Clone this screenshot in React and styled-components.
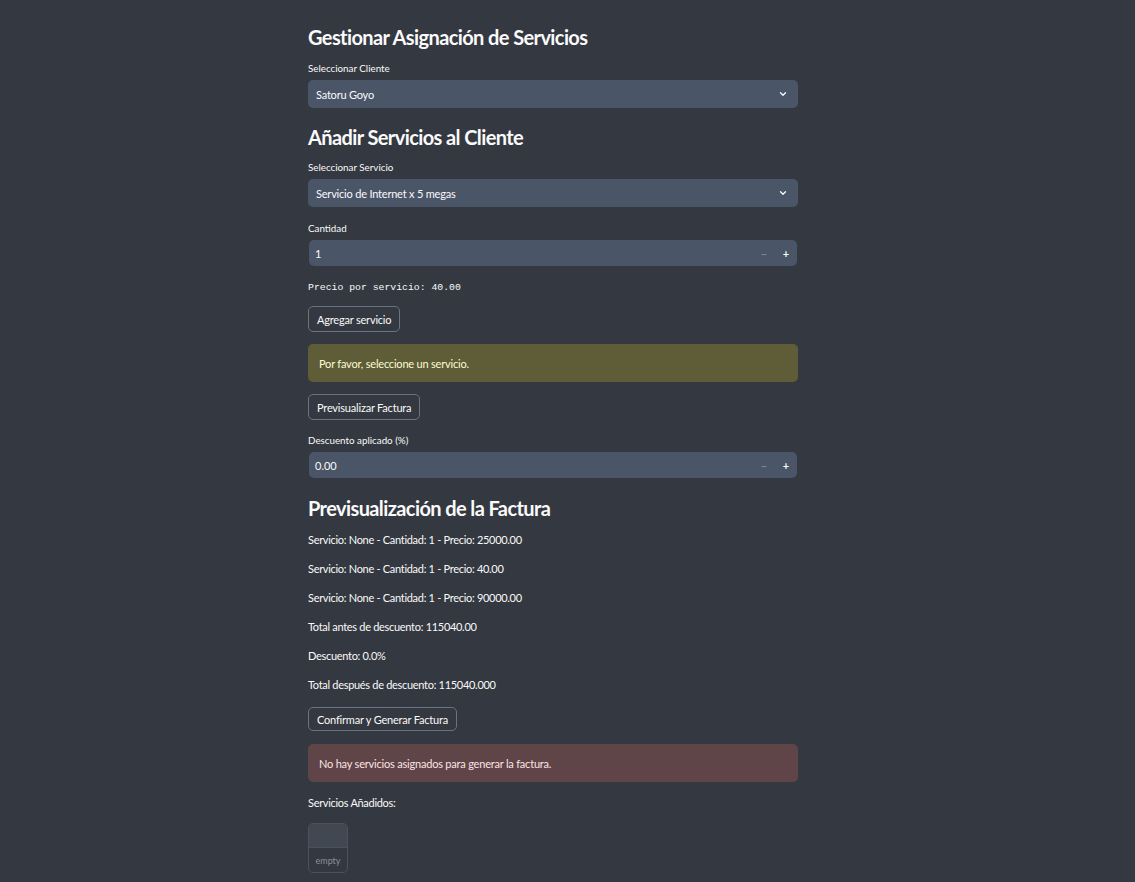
import React from "react";
import styled, { createGlobalStyle } from "styled-components";

const Global = createGlobalStyle`
  html, body { margin: 0; padding: 0; background: #343840; }
  body { font-family: Lato, "Noto Sans", sans-serif; color: #fafafa; }
`;

const Page = styled.div`
  min-height: 882px; background: #343840;
  padding: 24px 0 0 308px; box-sizing: border-box;
`;
const Column = styled.div`
  width: 490px; display: flex; flex-direction: column;
`;
const Heading = styled.h2`
  margin: 0; font-size: 20px; font-weight: 700; letter-spacing: -0.6px; line-height: 26px; color: #fafafa;
  padding: ${(p) => p.$pad || "0 0 12px"};
`;
const Field = styled.div`
  display: flex; flex-direction: column; gap: 6px; margin-bottom: ${(p) => p.$mb || 15}px;
`;
const Label = styled.div`
  font-size: 9.8px; line-height: 12px; color: #fafafa;
`;
const SelectBox = styled.div`
  height: 28px; border-radius: 5px; background: #4a5568;
  display: flex; align-items: center; justify-content: space-between;
  padding: 0 10px 0 8px; font-size: 11px; letter-spacing: -0.2px; color: #fafafa;
`;
const NumberBox = styled.div`
  height: 26px; margin: 0 1px; border-radius: 5px; background: #4a5568;
  display: grid; grid-template-columns: 1fr 22px 22px; align-items: center;
  padding-left: 6px; font-size: 11px; color: #fafafa;
`;
const Step = styled.span`
  text-align: center; font-size: 11px; font-weight: 700; color: ${(p) => (p.$dim ? "#7a8493" : "#fafafa")};
`;
const Mono = styled.div`
  font-family: "Liberation Mono", "DejaVu Sans Mono", monospace; font-size: 9.8px; line-height: 14px;
  margin-bottom: 11px;
`;
const Button = styled.button`
  align-self: flex-start; height: ${(p) => p.$h || 26}px; padding: 0 8px; border-radius: 5px;
  border: 1px solid #6b7280; background: transparent; color: #fafafa; letter-spacing: -0.2px;
  font-family: Lato, "Noto Sans", sans-serif; font-size: 11px; margin-bottom: ${(p) => p.$mb || 12}px; cursor: pointer;
`;
const Alert = styled.div`
  height: 38px; border-radius: 5px; background: ${(p) => p.$bg};
  display: flex; align-items: center; padding: 0 11px; font-size: 11px; letter-spacing: -0.2px;
  color: ${(p) => p.$fg}; margin-bottom: ${(p) => p.$mb || 12}px; box-sizing: border-box;
`;
const Line = styled.div`
  font-size: 11px; line-height: 14px; letter-spacing: -0.3px; margin-bottom: ${(p) => p.$mb || 15}px;
`;
const Empty = styled.div`
  width: 40px; height: 50px; border: 1px solid #4b525c; border-radius: 5px; box-sizing: border-box;
  overflow: hidden; display: grid; grid-template-rows: 24px 1fr;
`;
const EmptyHead = styled.div`
  background: #414852; border-bottom: 1px solid #4b525c;
`;
const EmptyText = styled.div`
  display: grid; place-items: center; font-size: 9px; color: #8a909a;
`;

const Chevron = () => (
  <svg width="10" height="10" viewBox="0 0 24 24" fill="none" stroke="#fafafa" strokeWidth="3.2" strokeLinecap="round" strokeLinejoin="round">
    <path d="M6 9l6 6 6-6" />
  </svg>
);

const lines = [
  "Servicio: None - Cantidad: 1 - Precio: 25000.00",
  "Servicio: None - Cantidad: 1 - Precio: 40.00",
  "Servicio: None - Cantidad: 1 - Precio: 90000.00",
  "Total antes de descuento: 115040.00",
  "Descuento: 0.0%",
  "Total después de descuento: 115040.000",
];

export default function App() {
  return (
    <Page>
      <Global />
      <Column>
        <Heading>Gestionar Asignación de Servicios</Heading>
        <Field $mb={16}>
          <Label>Seleccionar Cliente</Label>
          <SelectBox>Satoru Goyo<Chevron /></SelectBox>
        </Field>
        <Heading $pad="0 0 11px">Añadir Servicios al Cliente</Heading>
        <Field $mb={15}>
          <Label>Seleccionar Servicio</Label>
          <SelectBox>Servicio de Internet x 5 megas<Chevron /></SelectBox>
        </Field>
        <Field $mb={15}>
          <Label>Cantidad</Label>
          <NumberBox>1<Step $dim>−</Step><Step>+</Step></NumberBox>
        </Field>
        <Mono>Precio por servicio: 40.00</Mono>
        <Button $mb={12}>Agregar servicio</Button>
        <Alert $bg="#5e5d38" $fg="#fdfbd2">Por favor, seleccione un servicio.</Alert>
        <Button $mb={14}>Previsualizar Factura</Button>
        <Field $mb={17}>
          <Label>Descuento aplicado (%)</Label>
          <NumberBox>0.00<Step $dim>−</Step><Step>+</Step></NumberBox>
        </Field>
        <Heading $pad="0 0 12px">Previsualización de la Factura</Heading>
        {lines.map((l) => (
          <Line key={l}>{l}</Line>
        ))}
        <Button $h={24} $mb={13}>Confirmar y Generar Factura</Button>
        <Alert $bg="#5f4548" $fg="#fde4e4" $mb={14}>No hay servicios asignados para generar la factura.</Alert>
        <Line $mb={13}>Servicios Añadidos:</Line>
        <Empty>
          <EmptyHead />
          <EmptyText>empty</EmptyText>
        </Empty>
      </Column>
    </Page>
  );
}
